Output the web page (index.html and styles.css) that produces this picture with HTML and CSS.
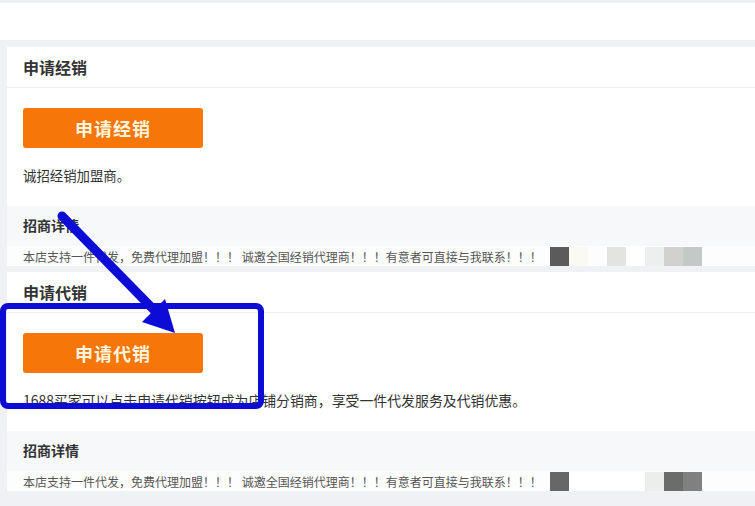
FILE: index.html
```html
<!DOCTYPE html>
<html lang="zh-CN">
<head>
    <meta charset="UTF-8">
    <meta name="viewport" content="width=device-width, initial-scale=1.0">
    <title>申请经销 / 申请代销</title>
    <link rel="stylesheet" href="styles.css">
</head>
<body>
    <div class="topbar"></div>

    <main class="page">
        <section class="card">
            <div class="card-head">申请经销</div>
            <div class="card-body">
                <button class="apply-btn" type="button">申请经销</button>
                <p class="intro">诚招经销加盟商。</p>
            </div>
            <div class="detail">
                <div class="detail-title">招商详情</div>
                <div class="detail-text">
                    <span>本店支持一件代发，免费代理加盟！！！ 诚邀全国经销代理商！！！有意者可直接与我联系！！！</span>
                    <span class="mosaic mosaic-a">
                        <i></i><i></i><i></i><i></i><i></i><i></i><i></i><i></i>
                    </span>
                </div>
            </div>
        </section>

        <section class="card">
            <div class="card-head">申请代销</div>
            <div class="card-body">
                <button class="apply-btn" type="button">申请代销</button>
                <p class="intro intro-wide">1688买家可以点击申请代销按钮成为店铺分销商，享受一件代发服务及代销优惠。</p>
            </div>
            <div class="detail">
                <div class="detail-title">招商详情</div>
                <div class="detail-text">
                    <span>本店支持一件代发，免费代理加盟！！！ 诚邀全国经销代理商！！！有意者可直接与我联系！！！</span>
                    <span class="mosaic mosaic-b">
                        <i></i><i></i><i></i><i></i><i></i><i></i><i></i><i></i>
                    </span>
                </div>
            </div>
        </section>
    </main>

    <!-- hand-drawn annotation on top of the screenshot -->
    <svg class="annot" width="755" height="506" viewBox="0 0 755 506">
        <line x1="62" y1="216" x2="157" y2="313" stroke="#0c0cd6" stroke-width="9" stroke-linecap="round"/>
        <polygon points="175,333 165,299 142,322" fill="#0c0cd6"/>
        <rect x="3" y="306" width="258" height="100" rx="5" fill="none" stroke="#0c0cd6" stroke-width="6"/>
    </svg>
</body>
</html>
```

FILE: styles.css
```css
body {
    margin: 0;
    background-color: #eff1f4;
    font-family: "Noto Sans CJK SC", "Noto Sans", "Liberation Sans", sans-serif;
    color: #333;
    position: relative;
    overflow: hidden;
  }

  .topbar {
    margin-top: 3px;
    height: 37px;
    background-color: #fff;
  }

  .page {
    display: flex;
    flex-direction: column;
    gap: 6px;
    padding: 7px 0 20px 7px;
  }

  .card {
    background-color: #fff;
  }

  .card-head {
    height: 40px;
    line-height: 40px;
    padding: 0 16px;
    font-size: 16px;
    font-weight: bold;
    color: #333;
    border-bottom: 1px solid #eeeff1;
  }

  .card-body {
    padding: 20px 16px 21px;
  }

  .apply-btn {
    display: block;
    width: 180px;
    height: 40px;
    border: none;
    border-radius: 3px;
    background-color: #f6760a;
    color: #fff4dc;
    font-family: inherit;
    font-size: 18px;
    font-weight: bold;
    letter-spacing: 1px;
    cursor: pointer;
  }

  .intro {
    margin: 17px 0 0;
    font-size: 13.4px;
    line-height: 20px;
    color: #333;
  }

  .intro-wide {
    font-size: 13.9px;
  }

  .detail {
    background-color: #f7f8fa;
  }

  .detail-title {
    height: 40px;
    line-height: 38px;
    padding: 0 16px;
    font-size: 14px;
    font-weight: bold;
    color: #333;
  }

  .detail-text {
    display: flex;
    align-items: center;
    height: 20px;
    padding: 0 16px;
    background-color: #fdfdfd;
    font-size: 12px;
    color: #555;
    white-space: nowrap;
  }

  .mosaic {
    display: flex;
    margin-left: 8px;
  }

  .mosaic i {
    width: 19px;
    height: 19px;
  }

  .mosaic-a i:nth-child(1) { background-color: #5b5b5b; }
  .mosaic-a i:nth-child(2) { background-color: #fafaf2; }
  .mosaic-a i:nth-child(3) { background-color: #fdfdfd; }
  .mosaic-a i:nth-child(4) { background-color: #e3e3df; }
  .mosaic-a i:nth-child(5) { background-color: #ffffff; }
  .mosaic-a i:nth-child(6) { background-color: #ebf0ee; }
  .mosaic-a i:nth-child(7) { background-color: #d1d1cd; }
  .mosaic-a i:nth-child(8) { background-color: #c3c9c6; }

  .mosaic-b i:nth-child(1) { background-color: #666766; }
  .mosaic-b i:nth-child(2),
  .mosaic-b i:nth-child(3),
  .mosaic-b i:nth-child(4),
  .mosaic-b i:nth-child(5) { background-color: #ffffff; }
  .mosaic-b i:nth-child(6) { background-color: #ebefeb; }
  .mosaic-b i:nth-child(7) { background-color: #6b6d6b; }
  .mosaic-b i:nth-child(8) { background-color: #7f807f; }

  .annot {
    position: absolute;
    top: 0;
    left: 0;
    pointer-events: none;
  }
```
